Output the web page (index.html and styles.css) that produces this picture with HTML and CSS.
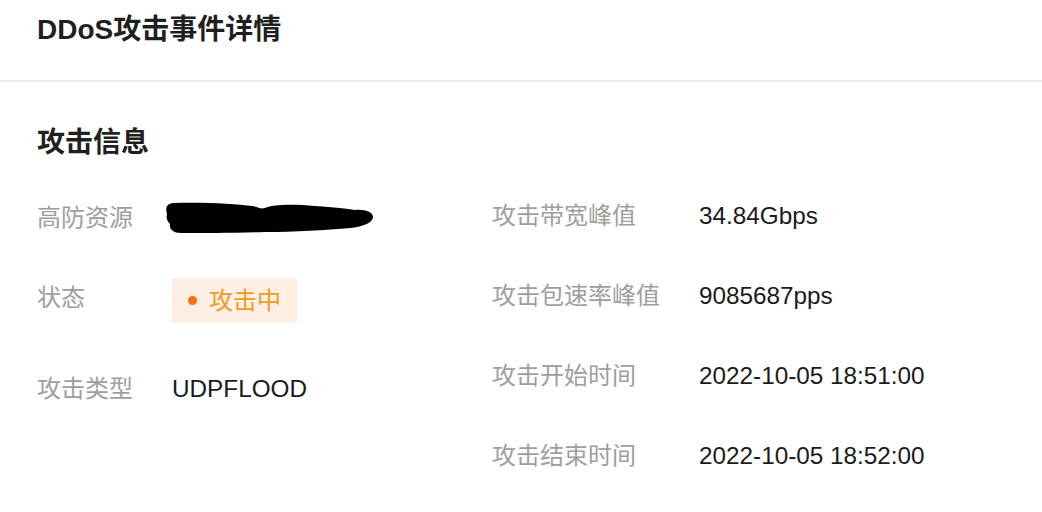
FILE: index.html
```html
<!DOCTYPE html>
<html lang="zh-CN">
<head>
<meta charset="utf-8">
<title>DDoS攻击事件详情</title>
<link rel="stylesheet" href="styles.css">
</head>
<body>
<header class="header">
  <h1 class="title">DDoS攻击事件详情</h1>
</header>
<section class="section">
  <h2 class="section-title">攻击信息</h2>
  <div class="cols">
    <div class="col col-left">
      <div class="row">
        <span class="label">高防资源</span>
        <span class="value">
          <svg class="redact" width="210" height="36" viewBox="0 0 210 36" aria-hidden="true">
            <path d="M8 3 C40 2 70 4 88 6 C94 8 96 9 100 8 C108 4 130 4 150 6 C170 7 182 9 190 10 C200 9 208 12 208 17 C208 22 200 26 186 28 C160 30 130 32 100 32 C70 33 40 33 16 33 C8 33 4 29 5 24 C2 21 1 18 2 14 C0 7 2 4 8 3 Z" fill="#000"/>
          </svg>
        </span>
      </div>
      <div class="row row-badge">
        <span class="label">状态</span>
        <span class="value"><span class="badge"><span class="dot"></span>攻击中</span></span>
      </div>
      <div class="row row-after-badge">
        <span class="label">攻击类型</span>
        <span class="value">UDPFLOOD</span>
      </div>
    </div>
    <div class="col col-right">
      <div class="row">
        <span class="label">攻击带宽峰值</span>
        <span class="value">34.84Gbps</span>
      </div>
      <div class="row">
        <span class="label">攻击包速率峰值</span>
        <span class="value">9085687pps</span>
      </div>
      <div class="row">
        <span class="label">攻击开始时间</span>
        <span class="value">2022-10-05 18:51:00</span>
      </div>
      <div class="row">
        <span class="label">攻击结束时间</span>
        <span class="value">2022-10-05 18:52:00</span>
      </div>
    </div>
  </div>
</section>
</body>
</html>
```

FILE: styles.css
```css
* { box-sizing: border-box; }

body {
  margin: 0;
  background: #fff;
  font-family: "Liberation Sans", "Noto Sans CJK SC", sans-serif;
  color: #1a1a1a;
}

.header {
  height: 82px;
  padding: 10px 37px 0;
  border-bottom: 2px solid #e8ebef;
}

.title {
  margin: 0;
  font-size: 28px;
  line-height: 40px;
  font-weight: 700;
  color: #1f1f1f;
}

.section {
  padding: 45px 37px 0;
}

.section-title {
  margin: 0;
  font-size: 28px;
  line-height: 32px;
  font-weight: 700;
  color: #1f1f1f;
}

.cols {
  display: flex;
  margin-top: 41px;
}

.col {
  display: flex;
  flex-direction: column;
}

.col-left {
  width: 455px;
  gap: 42px;
}

.col-right {
  gap: 48px;
}

.row {
  display: flex;
  align-items: center;
  min-height: 32px;
  font-size: 24px;
  line-height: 32px;
}

.row-badge .label {
  align-self: flex-start;
  padding-top: 4px;
}

.row-after-badge {
  margin-top: 8px;
}

.col-left .label { width: 135px; }
.col-right .label { width: 207px; }

.label {
  color: #9e9e9e;
  flex: none;
}

.value {
  color: #1a1a1a;
  display: flex;
  align-items: center;
  font-size: 24.3px;
}

.redact {
  display: block;
  margin-left: -7px;
}

.badge {
  display: inline-flex;
  align-items: center;
  height: 45px;
  padding: 0 16px 0 16px;
  background: #fdefe3;
  color: #f29a1c;
  font-size: 24px;
}

.dot {
  width: 9px;
  height: 9px;
  border-radius: 50%;
  background: #f5730f;
  margin-right: 12px;
}
```
